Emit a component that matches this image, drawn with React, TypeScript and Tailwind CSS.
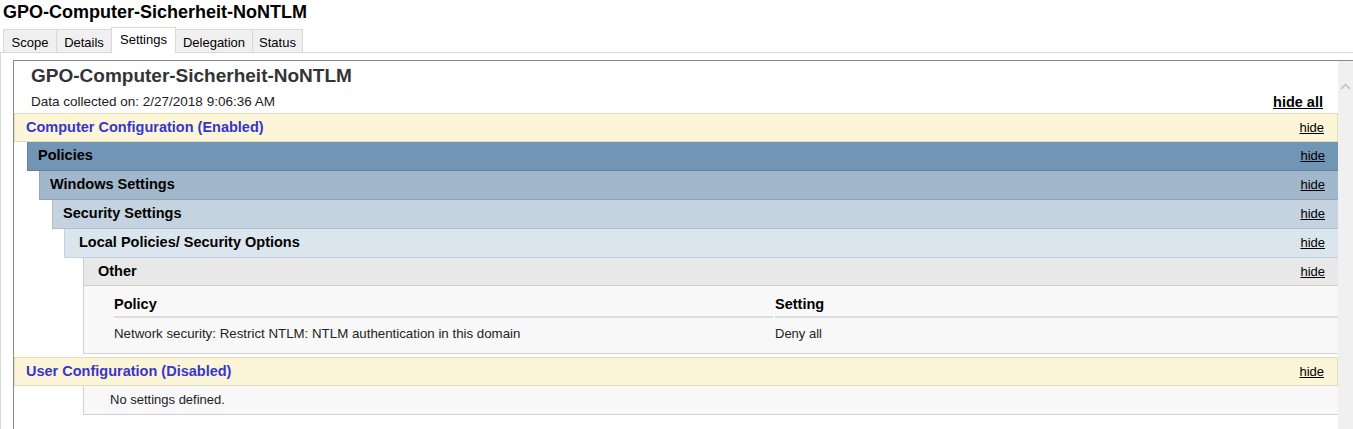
import React from "react";

const font = "font-['Liberation_Sans',Arial,sans-serif]";

function Hide({ label = "hide" }: { label?: string }) {
  return <span className="underline text-[13px] text-black">{label}</span>;
}

function Row({
  title,
  indent,
  textPad,
  bg,
  border,
  h = "h-[29px]",
  blue,
}: {
  title: string;
  indent: string;
  textPad: string;
  bg: string;
  border: string;
  h?: string;
  blue?: boolean;
}) {
  return (
    <div className={`${indent} ${bg} ${border} ${h} border-b border-l flex items-center justify-between pr-[13px]`}>
      <span className={`${textPad} text-[14.5px] font-bold ${blue ? "text-[#3535cf]" : "text-black"}`}>{title}</span>
      <Hide />
    </div>
  );
}

export default function App() {
  const tabs = [
    { t: "Scope", w: "w-[54px]" },
    { t: "Details", w: "w-[56px]" },
    { t: "Settings", w: "w-[65px]" },
    { t: "Delegation", w: "w-[78px]" },
    { t: "Status", w: "w-[51px]" },
  ];
  return (
    <div className={`w-[1353px] h-[429px] overflow-hidden bg-white ${font}`}>
      {/* window title */}
      <div className="h-[27px] pl-[3px] pt-[1px] text-[18px] font-bold leading-[22px] text-black">
        GPO-Computer-Sicherheit-NoNTLM
      </div>

      {/* tabs */}
      <div className="flex items-end h-[25px] pl-[3px]">
        {tabs.map(({ t, w }) =>
          t === "Settings" ? (
            <div
              key={t}
              className={`${w} h-[26px] -mb-px -ml-px pt-[2px] text-center bg-white border border-b-0 border-[#d9d9d9] text-[13px] text-black relative z-10`}
            >
              {t}
            </div>
          ) : (
            <div
              key={t}
              className={`${w} h-[23px] pt-[3px] text-center bg-[#f0f0f0] border border-b-0 border-[#d9d9d9] -ml-px first:ml-0 text-[13px] text-black`}
            >
              {t}
            </div>
          )
        )}
      </div>

      {/* tab page */}
      <div className="border-t border-l border-[#d9d9d9] h-[378px] pt-[7px] pl-[12px]">
        <div className="flex h-full border-t border-l border-[#8a8a8a]">
          <div className="flex-1 bg-white">
            <div className="pl-[17px] pt-[4px] text-[19px] font-bold leading-[22px] text-[#333]">
              GPO-Computer-Sicherheit-NoNTLM
            </div>
            <div className="flex items-center justify-between h-[26px] pl-[17px] pr-[15px] pt-[5px]">
              <span className="text-[13.5px] text-[#222]">Data collected on: 2/27/2018 9:06:36 AM</span>
              <span className="underline text-[14.5px] font-bold text-black">hide all</span>
            </div>

            <div className="border-t border-[#e4dcb9]">
              <Row title="Computer Configuration (Enabled)" indent="ml-0" textPad="pl-[11px]" bg="bg-[#fdf5d8]" border="border-[#e4dcb9] border-r" h="h-[28px]" blue />
            </div>
            <Row title="Policies" indent="ml-[13px]" textPad="pl-[10px]" bg="bg-[#7095b5]" border="border-[#5f84a4]" />
            <Row title="Windows Settings" indent="ml-[25px]" textPad="pl-[10px]" bg="bg-[#a2b7cb]" border="border-[#8fa6bb]" />
            <Row title="Security Settings" indent="ml-[38px]" textPad="pl-[10px]" bg="bg-[#c4d3df]" border="border-[#adbfcd]" />
            <Row title="Local Policies/ Security Options" indent="ml-[50px]" textPad="pl-[14px]" bg="bg-[#dbe5ed]" border="border-[#c2d0db]" />
            <Row title="Other" indent="ml-[69px]" textPad="pl-[14px]" bg="bg-[#e8e8e8]" border="border-[#cfcfcf]" h="h-[28px]" />

            {/* policy table */}
            <div className="ml-[69px] h-[68px] bg-[#f8f8f8] border-l border-b border-[#d2d2d2] pl-[30px]">
              <div className="flex h-[32px]">
                <div className="w-[659px] border-b-2 border-[#dcdcdc] flex items-center pt-[7px] text-[14.5px] font-bold text-black">Policy</div>
                <div className="flex-1 ml-[2px] border-b-2 border-[#dcdcdc] flex items-center pt-[7px] text-[14.5px] font-bold text-black">Setting</div>
              </div>
              <div className="flex h-[32px] items-center text-[13px] text-[#222]">
                <div className="w-[661px] text-[13.3px]">Network security: Restrict NTLM: NTLM authentication in this domain</div>
                <div className="flex-1">Deny all</div>
              </div>
            </div>

            <div className="mt-[3px] border-t border-[#e4dcb9]">
              <Row title="User Configuration (Disabled)" indent="ml-0" textPad="pl-[11px]" bg="bg-[#fdf5d8]" border="border-[#e4dcb9] border-r" h="h-[28px]" blue />
            </div>
            <div className="ml-[69px] h-[29px] bg-[#f8f8f8] border-l border-b border-[#d2d2d2] flex items-center pl-[26px] text-[13px] text-[#222]">
              No settings defined.
            </div>
          </div>

          {/* scrollbar */}
          <div className="w-[15px] bg-[#f0f0f0] flex justify-center pt-[22px]">
            <svg width="11" height="7" viewBox="0 0 11 7">
              <path d="M1 6 L5.5 1.5 L10 6" fill="none" stroke="#c2c2c2" strokeWidth="1.6" />
            </svg>
          </div>
        </div>
      </div>
    </div>
  );
}
